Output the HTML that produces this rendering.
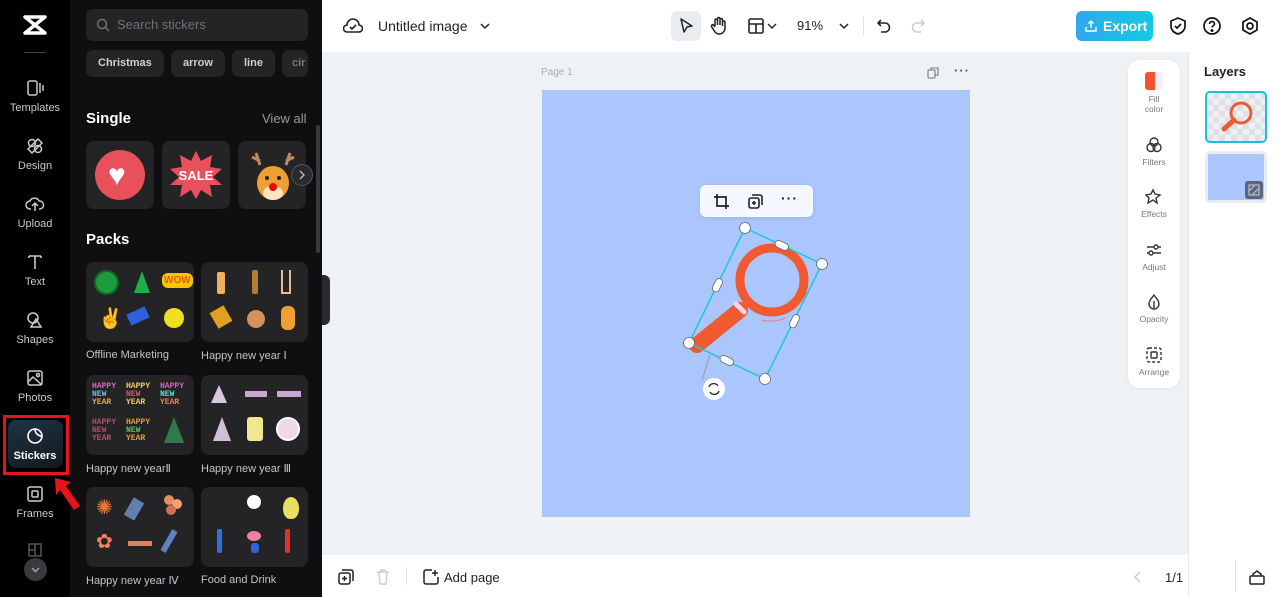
<!DOCTYPE html>
<html><head><meta charset="utf-8"><style>
*{margin:0;padding:0;box-sizing:border-box}
body{width:1280px;height:597px;overflow:hidden;font-family:"Liberation Sans",sans-serif;background:#eff2f5;position:relative}
.abs{position:absolute}
#rail{left:0;top:0;width:70px;height:597px;background:#000}
.ri{position:absolute;left:0;width:70px;text-align:center;color:#c9c9cc;font-size:11px}
.ri svg{display:block;margin:0 auto 4px}
#panel{left:70px;top:0;width:252px;height:597px;background:#0f0f11}
.chip{position:absolute;top:50px;height:27px;border-radius:7px;background:#242427;color:#d0d0d3;font-size:11px;font-weight:bold;line-height:27px;padding:0 12px}
.card{position:absolute;background:#242427;border-radius:8px}
.lab{position:absolute;color:#c4c4c8;font-size:11px}
.dot{position:absolute;border-radius:50%}
#top{left:322px;top:0;width:958px;height:52px;background:#fff}
#bot{left:322px;top:555px;width:866px;height:42px;background:#fff}
#layers{left:1188px;top:52px;width:92px;height:545px;background:#fff;border-left:1px solid #e4e7eb}
.tl{position:absolute;left:0;width:52px;text-align:center;font-size:8.5px;color:#777;line-height:10px}
.tl svg{display:block;margin:0 auto 3px}
</style></head><body>
<div id="rail" class="abs">
  <svg class="abs" style="left:22px;top:14px" width="26" height="22" viewBox="0 0 26 22"><path d="M3 3h20L3 19h20L3 3z" fill="none" stroke="#fff" stroke-width="3.5" stroke-linejoin="round"/></svg>
  <div class="abs" style="left:24px;top:52px;width:22px;height:1px;background:#444"></div>
  <div class="ri" style="top:78px"><svg width="20" height="20" viewBox="0 0 20 20" fill="none" stroke="#ccc" stroke-width="1.5"><rect x="3" y="3" width="9" height="14" rx="2"/><path d="M15 5v10M18 7v6"/></svg>Templates</div>
  <div class="ri" style="top:136px"><svg width="20" height="20" viewBox="0 0 20 20" fill="none" stroke="#ccc" stroke-width="1.5"><circle cx="7" cy="7" r="3.5"/><circle cx="13" cy="13" r="3.5"/><path d="M13 3l4 4-10 10-4-4z"/></svg>Design</div>
  <div class="ri" style="top:194px"><svg width="20" height="20" viewBox="0 0 20 20" fill="none" stroke="#ccc" stroke-width="1.5"><path d="M6 15H5a4 4 0 010-8 5 5 0 019 0 4 4 0 011 8h-1M10 17V10M7 12l3-3 3 3"/></svg>Upload</div>
  <div class="ri" style="top:252px"><svg width="20" height="20" viewBox="0 0 20 20" fill="none" stroke="#ccc" stroke-width="1.6"><path d="M4 4h12M10 4v13M4 4v2M16 4v2"/></svg>Text</div>
  <div class="ri" style="top:310px"><svg width="20" height="20" viewBox="0 0 20 20" fill="none" stroke="#ccc" stroke-width="1.5"><circle cx="8" cy="8" r="5"/><path d="M11 9l5 8H6z"/></svg>Shapes</div>
  <div class="ri" style="top:368px"><svg width="20" height="20" viewBox="0 0 20 20" fill="none" stroke="#ccc" stroke-width="1.5"><rect x="3" y="3" width="14" height="14" rx="2"/><path d="M3 14l5-5 9 8"/><circle cx="13" cy="7" r="1.5"/></svg>Photos</div>
  <div class="abs" style="left:3px;top:415px;width:66px;height:60px;border:3px solid #e8141c"></div>
  <div class="abs" style="left:8px;top:420px;width:55px;height:48px;border-radius:8px;background:linear-gradient(160deg,#1d3346,#16181c)"></div>
  <div class="ri" style="top:426px;color:#fff;font-weight:bold"><svg width="20" height="20" viewBox="0 0 20 20" fill="none" stroke="#fff" stroke-width="1.6"><path d="M17 10a7 7 0 11-7-7c0 4 3 7 7 7zM10 3a7 7 0 017 7"/></svg>Stickers</div>
  <div class="ri" style="top:484px"><svg width="20" height="20" viewBox="0 0 20 20" fill="none" stroke="#ccc" stroke-width="1.5"><rect x="3" y="3" width="14" height="14" rx="2"/><rect x="7" y="7" width="6" height="6" rx="1"/></svg>Frames</div>
  <svg class="abs" style="left:27px;top:542px" width="16" height="16" viewBox="0 0 16 16" fill="none" stroke="#555" stroke-width="1.5"><rect x="2" y="2" width="12" height="12"/><path d="M8 2v12M2 8h6"/></svg>
  <div class="abs" style="left:24px;top:558px;width:23px;height:23px;border-radius:50%;background:#3a3a3e"><svg width="23" height="23" viewBox="0 0 23 23"><path d="M8 10l3.5 3.5L15 10" fill="none" stroke="#aaa" stroke-width="1.4"/></svg></div>
</div>
<div id="panel" class="abs">
  <div class="abs" style="left:16px;top:9px;width:222px;height:32px;border-radius:7px;background:#242427;color:#707075;font-size:13px;line-height:32px;padding-left:31px">Search stickers
    <svg class="abs" style="left:10px;top:9px" width="14" height="14" viewBox="0 0 14 14" fill="none" stroke="#777" stroke-width="1.4"><circle cx="6" cy="6" r="4.5"/><path d="M9.5 9.5L13 13"/></svg></div>
  <div class="chip" style="left:16px">Christmas</div>
  <div class="chip" style="left:101px">arrow</div>
  <div class="chip" style="left:162px">line</div>
  <div class="chip" style="left:212px;width:26px;padding:0 10px;overflow:hidden;color:#777">cir</div>
  <div class="abs" style="left:16px;top:110px;color:#fff;font-size:15px;font-weight:bold">Single</div>
  <div class="abs" style="left:192px;top:111px;color:#9a9a9e;font-size:13px">View all</div>
  <div class="abs" style="left:246px;top:125px;width:4px;height:128px;border-radius:2px;background:#3a3a3e"></div>
  <div class="card" style="left:16px;top:141px;width:68px;height:68px"><div class="dot" style="left:9px;top:9px;width:50px;height:50px;background:#e8505b"></div><div class="abs" style="left:22px;top:20px;color:#fff;font-size:30px;line-height:30px">♥</div></div>
  <div class="card" style="left:92px;top:141px;width:68px;height:68px"><svg class="abs" style="left:6px;top:8px" width="56" height="52" viewBox="0 0 56 52"><polygon points="28,2 33,12 44,6 42,18 54,20 45,28 54,36 42,36 44,48 33,41 28,50 23,41 12,48 14,36 2,36 11,28 2,20 14,18 12,6 23,12" fill="#e8505b"/><text x="28" y="31" text-anchor="middle" font-family="Liberation Sans" font-weight="bold" font-size="13" fill="#fff">SALE</text></svg></div>
  <div class="card" style="left:168px;top:141px;width:68px;height:68px;overflow:hidden"><svg class="abs" style="left:10px;top:8px" width="50" height="56" viewBox="0 0 50 56"><path d="M12 16L8 4M12 12L4 8M38 16L42 4M38 12L46 8" stroke="#c08a5e" stroke-width="3"/><ellipse cx="25" cy="34" rx="16" ry="17" fill="#f0a030"/><ellipse cx="25" cy="44" rx="10" ry="7" fill="#fde6c0"/><circle cx="25" cy="38" r="4" fill="#e01010"/><circle cx="19" cy="29" r="2" fill="#222"/><circle cx="31" cy="29" r="2" fill="#222"/></svg></div>
  <div class="abs" style="left:221px;top:164px;width:22px;height:22px;border-radius:50%;background:#2a2a2e;border:1px solid #555"><svg width="20" height="20" viewBox="0 0 20 20"><path d="M8 6l4 4-4 4" fill="none" stroke="#bbb" stroke-width="1.4"/></svg></div>
  <div class="abs" style="left:16px;top:231px;color:#fff;font-size:15px;font-weight:bold">Packs</div>

  <div class="card" style="left:16px;top:262px;width:108px;height:80px">
    <div class="dot" style="left:8px;top:8px;width:25px;height:25px;background:#1e9a3f;border:2px solid #0b6a20"></div>
    <div class="abs" style="left:48px;top:9px;width:0;height:0;border-left:8px solid transparent;border-right:8px solid transparent;border-bottom:22px solid #1fae4a"></div>
    <div class="abs" style="left:76px;top:11px;color:#e85a18;font-size:10px;font-weight:bold;background:#f6c500;border-radius:6px;padding:2px 2px">WOW</div>
    <div class="abs" style="left:12px;top:44px;color:#fff;font-size:20px">✌</div>
    <div class="abs" style="left:42px;top:48px;width:20px;height:12px;background:#3060e0;transform:rotate(-25deg)"></div>
    <div class="dot" style="left:78px;top:46px;width:20px;height:20px;background:#f0e020"></div>
  </div>
  <div class="card" style="left:131px;top:262px;width:107px;height:80px">
    <div class="abs" style="left:16px;top:10px;width:8px;height:22px;background:#f0b060;border-radius:2px"></div>
    <div class="abs" style="left:51px;top:8px;width:6px;height:24px;background:#b08030;border-radius:2px"></div>
    <div class="abs" style="left:80px;top:8px;width:10px;height:24px;border:2px solid #e0c090;border-top:none"></div>
    <div class="abs" style="left:12px;top:46px;width:16px;height:18px;background:#e0a020;transform:rotate(-30deg)"></div>
    <div class="dot" style="left:46px;top:48px;width:18px;height:18px;background:#d8905a"></div>
    <div class="abs" style="left:80px;top:44px;width:14px;height:24px;border-radius:6px;background:#f0a030"></div>
  </div>
  <div class="lab" style="left:16px;top:349px">Offline Marketing</div>
  <div class="lab" style="left:131px;top:349px">Happy new year Ⅰ</div>

  <div class="card" style="left:16px;top:375px;width:108px;height:80px;font-size:8px;font-weight:bold;line-height:8px;font-family:'Liberation Mono',monospace">
    <div class="abs" style="left:6px;top:8px;color:#e060c0">HAPPY<br><span style="color:#60c0f0">NEW</span><br><span style="color:#f0a040">YEAR</span></div>
    <div class="abs" style="left:40px;top:8px;color:#f0d040">HAPPY<br><span style="color:#e05070">NEW</span><br>YEAR</div>
    <div class="abs" style="left:74px;top:8px;color:#e060c0">HAPPY<br><span style="color:#60e0d0">NEW</span><br><span style="color:#f08040">YEAR</span></div>
    <div class="abs" style="left:6px;top:44px;color:#b05060">HAPPY<br>NEW<br>YEAR</div>
    <div class="abs" style="left:40px;top:44px;color:#e0a030">HAPPY<br><span style="color:#60c060">NEW</span><br>YEAR</div>
    <div class="abs" style="left:78px;top:42px;width:0;height:0;border-left:10px solid transparent;border-right:10px solid transparent;border-bottom:26px solid #2e7a4a"></div>
  </div>
  <div class="card" style="left:131px;top:375px;width:107px;height:80px">
    <div class="abs" style="left:10px;top:10px;width:0;height:0;border-left:8px solid transparent;border-right:8px solid transparent;border-bottom:18px solid #d8c8e0"></div>
    <div class="abs" style="left:44px;top:16px;width:22px;height:6px;background:#c8a8d0"></div>
    <div class="abs" style="left:76px;top:16px;width:24px;height:6px;background:#c8a8d0"></div>
    <div class="abs" style="left:12px;top:42px;width:0;height:0;border-left:9px solid transparent;border-right:9px solid transparent;border-bottom:24px solid #d0c0d8"></div>
    <div class="abs" style="left:46px;top:42px;width:16px;height:24px;background:#f0e890;border-radius:3px"></div>
    <div class="dot" style="left:75px;top:42px;width:24px;height:24px;background:#f0d8e8;border:2px solid #fff"></div>
  </div>
  <div class="lab" style="left:16px;top:462px">Happy new yearⅡ</div>
  <div class="lab" style="left:131px;top:462px">Happy new year Ⅲ</div>

  <div class="card" style="left:16px;top:487px;width:108px;height:80px">
    <div class="abs" style="left:10px;top:8px;color:#e07840;font-size:20px">✺</div>
    <div class="abs" style="left:42px;top:12px;width:12px;height:20px;background:#6080b0;transform:rotate(30deg)"></div>
    <div class="dot" style="left:78px;top:8px;width:10px;height:10px;background:#e09060"></div>
    <div class="dot" style="left:86px;top:12px;width:10px;height:10px;background:#f0a070"></div>
    <div class="dot" style="left:80px;top:18px;width:10px;height:10px;background:#d07050"></div>
    <div class="abs" style="left:10px;top:42px;color:#f08060;font-size:20px">✿</div>
    <div class="abs" style="left:42px;top:54px;width:24px;height:5px;background:#e08060"></div>
    <div class="abs" style="left:80px;top:42px;width:6px;height:24px;background:#6080c0;transform:rotate(30deg)"></div>
  </div>
  <div class="card" style="left:131px;top:487px;width:107px;height:80px">
    <div class="dot" style="left:46px;top:8px;width:14px;height:14px;background:#fff"></div>
    <div class="abs" style="left:82px;top:10px;width:16px;height:22px;border-radius:50% 50% 45% 45%;background:#e8e060"></div>
    <div class="abs" style="left:16px;top:42px;width:5px;height:24px;background:#3070e0;border-radius:2px"></div>
    <div class="dot" style="left:46px;top:44px;width:14px;height:10px;background:#f080a0"></div>
    <div class="abs" style="left:50px;top:56px;width:8px;height:10px;background:#3060e0;border-radius:3px"></div>
    <div class="abs" style="left:84px;top:42px;width:5px;height:24px;background:#e03030;border-radius:2px"></div>
  </div>
  <div class="lab" style="left:16px;top:574px">Happy new year Ⅳ</div>
  <div class="lab" style="left:131px;top:574px">Food and Drink</div>
</div>
<svg class="abs" style="left:52px;top:476px;z-index:5" width="30" height="38" viewBox="0 0 30 38"><path d="M3 2l16 4-5 4 14 20-6 4-14-20-4 5z" fill="#e8141c"/></svg>
<div class="abs" style="left:322px;top:275px;width:8px;height:50px;border-radius:0 6px 6px 0;background:#2a2a2e"></div>

<div id="top" class="abs">
  <svg class="abs" style="left:21px;top:17px" width="20" height="18" viewBox="0 0 20 18" fill="none" stroke="#222" stroke-width="1.6"><path d="M5 15H4a3.5 3.5 0 010-7 6 6 0 0112 0 3.5 3.5 0 010 7H5z"/><path d="M7 10l2 2 4-4"/></svg>
  <div class="abs" style="left:56px;top:18px;font-size:14px;color:#222">Untitled image</div>
  <svg class="abs" style="left:157px;top:20px" width="12" height="12" viewBox="0 0 12 12"><path d="M2 4l4 4 4-4" fill="none" stroke="#222" stroke-width="1.5"/></svg>
  <div class="abs" style="left:349px;top:11px;width:30px;height:30px;border-radius:6px;background:#e9ecf0"></div>
  <svg class="abs" style="left:355px;top:17px" width="18" height="18" viewBox="0 0 18 18"><path d="M4 2l11 7-5 1-3 5z" fill="none" stroke="#222" stroke-width="1.5" stroke-linejoin="round"/></svg>
  <svg class="abs" style="left:388px;top:16px" width="18" height="20" viewBox="0 0 18 20" fill="none" stroke="#222" stroke-width="1.5"><path d="M5 10V4a1.3 1.3 0 012.5 0v5M7.5 9V2.5a1.3 1.3 0 012.5 0V9M10 9V3.5a1.3 1.3 0 012.5 0V10M12.5 10V6a1.3 1.3 0 012.5 0v6a6 6 0 01-6 6c-3 0-4-2-6-5l-1.5-2.5a1.3 1.3 0 012-1.5L5 11"/></svg>
  <svg class="abs" style="left:425px;top:17px" width="18" height="18" viewBox="0 0 18 18" fill="none" stroke="#222" stroke-width="1.6"><rect x="2" y="2" width="14" height="14" rx="1.5"/><path d="M2 7h14M9 7v9"/></svg>
  <svg class="abs" style="left:445px;top:21px" width="10" height="10" viewBox="0 0 10 10"><path d="M1 3l4 4 4-4" fill="none" stroke="#222" stroke-width="1.4"/></svg>
  <div class="abs" style="left:475px;top:18px;font-size:13px;color:#222">91%</div>
  <svg class="abs" style="left:516px;top:20px" width="12" height="12" viewBox="0 0 12 12"><path d="M2 4l4 4 4-4" fill="none" stroke="#222" stroke-width="1.5"/></svg>
  <div class="abs" style="left:541px;top:17px;width:1px;height:18px;background:#e0e0e0"></div>
  <svg class="abs" style="left:553px;top:17px" width="18" height="18" viewBox="0 0 18 18" fill="none" stroke="#222" stroke-width="1.6"><path d="M6 3L3 6l3 3M3 6h7a4.5 4.5 0 010 9H6"/></svg>
  <svg class="abs" style="left:587px;top:17px" width="18" height="18" viewBox="0 0 18 18" fill="none" stroke="#ccc" stroke-width="1.6"><path d="M12 3l3 3-3 3M15 6H8a4.5 4.5 0 000 9h4"/></svg>
  <div class="abs" style="left:754px;top:11px;width:77px;height:30px;border-radius:6px;background:linear-gradient(90deg,#2fa8ee,#14c9e2);color:#fff;font-weight:bold;font-size:14px;line-height:30px;padding-left:27px">Export
    <svg class="abs" style="left:8px;top:8px" width="14" height="14" viewBox="0 0 14 14" fill="none" stroke="#fff" stroke-width="1.4"><path d="M2 8v4h10V8M7 9V2M4.5 4.5L7 2l2.5 2.5"/></svg></div>
  <svg class="abs" style="left:846px;top:16px" width="20" height="20" viewBox="0 0 20 20" fill="none" stroke="#111" stroke-width="1.7"><path d="M10 2l7 3v5c0 4-3 7-7 8-4-1-7-4-7-8V5z"/><path d="M7 10l2 2 4-4"/></svg>
  <svg class="abs" style="left:880px;top:16px" width="20" height="20" viewBox="0 0 20 20" fill="none" stroke="#111" stroke-width="1.7"><circle cx="10" cy="10" r="8"/><path d="M7.5 8a2.5 2.5 0 115 0c0 1.5-2.5 2-2.5 3.5"/><circle cx="10" cy="14.5" r=".6" fill="#111"/></svg>
  <svg class="abs" style="left:918px;top:16px" width="20" height="20" viewBox="0 0 20 20" fill="none" stroke="#111" stroke-width="1.7"><path d="M10 2l7 4v8l-7 4-7-4V6z"/><circle cx="10" cy="10" r="3"/></svg>
</div>

<div class="abs" style="left:541px;top:67px;font-size:10px;color:#aab">Page 1</div>
<svg class="abs" style="left:927px;top:67px" width="12" height="12" viewBox="0 0 12 12" fill="none" stroke="#777" stroke-width="1.1"><rect x="1" y="3" width="7" height="8" rx="1"/><path d="M4 3V1h7v7H8"/></svg>
<div class="abs" style="left:954px;top:63px;font-size:13px;color:#555;font-weight:bold;letter-spacing:1px">···</div>
<div class="abs" style="left:542px;top:90px;width:428px;height:427px;background:#abc5fd"></div>

<div class="abs" style="left:700px;top:185px;width:113px;height:32px;border-radius:6px;background:#f4f7fd;box-shadow:0 1px 4px rgba(0,0,0,.1)"></div>
<svg class="abs" style="left:713px;top:193px" width="17" height="17" viewBox="0 0 17 17" fill="none" stroke="#222" stroke-width="1.7"><path d="M4 1v12h12M1 4h12v12"/></svg>
<svg class="abs" style="left:747px;top:193px" width="17" height="17" viewBox="0 0 17 17" fill="none" stroke="#222" stroke-width="1.6"><rect x="2" y="5" width="10" height="10" rx="2"/><path d="M5 2h8a2 2 0 012 2v8M7 8v4M5 10h4"/></svg>
<div class="abs" style="left:781px;top:190px;font-size:14px;font-weight:bold;color:#222;letter-spacing:1px">···</div>

<svg class="abs" style="left:660px;top:210px;overflow:visible" width="200" height="200" viewBox="660 210 200 200">
  <line x1="710" y1="355" x2="702" y2="380" stroke="#999" stroke-width="1"/>
  <path d="M697 345L740 310" stroke="#f05a30" stroke-width="16" stroke-linecap="round"/>
  <circle cx="772" cy="280" r="32" fill="none" stroke="#f05a30" stroke-width="9"/>
  <path d="M736 304l8 8" stroke="#f8d8e8" stroke-width="5" stroke-linecap="round"/>
  <path d="M762 320q12 3 24-2" fill="none" stroke="#f07070" stroke-width="0.8"/>
  <polygon points="745,228 822,264 765,379 689,343" fill="none" stroke="#1cc8d8" stroke-width="1.5"/>
  <g fill="#fff" stroke="#666" stroke-width="0.8">
    <circle cx="745" cy="228" r="5.5"/><circle cx="822" cy="264" r="5.5"/><circle cx="765" cy="379" r="5.5"/><circle cx="689" cy="343" r="5.5"/>
    <rect x="775" y="242" width="14" height="7" rx="3.5" transform="rotate(25 782 245)"/>
    <rect x="787" y="318" width="14" height="7" rx="3.5" transform="rotate(-64 794 321)"/>
    <rect x="720" y="357" width="14" height="7" rx="3.5" transform="rotate(25 727 360)"/>
    <rect x="710" y="282" width="14" height="7" rx="3.5" transform="rotate(-64 717 285)"/>
  </g>
  <circle cx="714" cy="389" r="11" fill="#fff"/>
  <path d="M709 387a5 5 0 019-1M719 391a5 5 0 01-9 1" fill="none" stroke="#222" stroke-width="1.3"/>
</svg>

<div class="abs" style="left:1128px;top:60px;width:52px;height:328px;border-radius:12px;background:#fff;box-shadow:0 1px 4px rgba(0,0,0,.06)">
  <div class="tl" style="top:12px"><div style="width:18px;height:18px;margin:0 auto 4px;border-radius:3px;background:linear-gradient(90deg,#f5532d 55%,#f6eefc 55%)"></div>Fill<br>color</div>
  <div class="tl" style="top:76px"><svg width="18" height="18" viewBox="0 0 18 18" fill="none" stroke="#333" stroke-width="1.4"><circle cx="9" cy="6" r="4"/><circle cx="6" cy="11.5" r="4"/><circle cx="12" cy="11.5" r="4"/></svg>Filters</div>
  <div class="tl" style="top:128px"><svg width="18" height="18" viewBox="0 0 18 18" fill="none" stroke="#333" stroke-width="1.4"><path d="M8 2l2 4 5 1-4 3 1 5-4-3-5 3 1-5-3-3 5-1z"/></svg>Effects</div>
  <div class="tl" style="top:181px"><svg width="18" height="18" viewBox="0 0 18 18" fill="none" stroke="#333" stroke-width="1.4"><path d="M2 6h14M2 12h14"/><circle cx="11" cy="6" r="2" fill="#fff"/><circle cx="6" cy="12" r="2" fill="#fff"/></svg>Adjust</div>
  <div class="tl" style="top:233px"><svg width="18" height="18" viewBox="0 0 18 18" fill="none" stroke="#333" stroke-width="1.4"><path d="M9 2c3 4 5 6 5 9a5 5 0 01-10 0c0-3 2-5 5-9zM9 8v7"/></svg>Opacity</div>
  <div class="tl" style="top:286px"><svg width="18" height="18" viewBox="0 0 18 18" fill="none" stroke="#333" stroke-width="1.4"><rect x="2" y="2" width="14" height="14" rx="2" stroke-dasharray="3 2"/><rect x="6" y="6" width="6" height="6" rx="1"/></svg>Arrange</div>
</div>

<div id="layers" class="abs">
  <div class="abs" style="left:15px;top:12px;font-size:13px;font-weight:bold;color:#222">Layers</div>
  <div class="abs" style="left:16px;top:39px;width:62px;height:52px;border:2px solid #16c2db;border-radius:5px;background:repeating-conic-gradient(#dde1e6 0 25%,#eef0f3 0 50%) 0 0/12px 12px">
    <svg width="58" height="48" viewBox="0 0 58 48"><circle cx="34" cy="20" r="10" fill="none" stroke="#f05a30" stroke-width="3"/><path d="M17 36l10-9" stroke="#f05a30" stroke-width="5" stroke-linecap="round"/></svg></div>
  <div class="abs" style="left:16px;top:99px;width:62px;height:52px;border:3px solid #e9edf2;border-radius:5px;background:#abc5fd">
    <div class="abs" style="right:1px;bottom:1px;width:18px;height:18px;border-radius:3px;background:#5a6480"><svg width="18" height="18" viewBox="0 0 18 18" fill="none" stroke="#ccd" stroke-width="1"><rect x="4" y="4" width="10" height="10"/><path d="M4 10l6-6M7 14l7-7"/></svg></div>
  </div>
</div>

<div id="bot" class="abs">
  <svg class="abs" style="left:16px;top:14px" width="16" height="16" viewBox="0 0 16 16" fill="none" stroke="#222" stroke-width="1.5"><rect x="1" y="4" width="11" height="11" rx="2"/><path d="M4 1h9a2 2 0 012 2v9M6.5 7v5M4 9.5h5"/></svg>
  <svg class="abs" style="left:54px;top:14px" width="14" height="16" viewBox="0 0 14 16" fill="none" stroke="#ccc" stroke-width="1.4"><path d="M1 3h12M5 3V1h4v2M3 3l1 12h6l1-12"/></svg>
  <div class="abs" style="left:84px;top:12px;width:1px;height:18px;background:#e0e0e0"></div>
  <svg class="abs" style="left:101px;top:14px" width="16" height="16" viewBox="0 0 16 16" fill="none" stroke="#222" stroke-width="1.5"><path d="M9 1H3a2 2 0 00-2 2v10a2 2 0 002 2h10a2 2 0 002-2V8M12 1v6M9 4h6"/></svg>
  <div class="abs" style="left:122px;top:15px;font-size:13px;color:#222">Add page</div>
  <svg class="abs" style="left:810px;top:15px" width="12" height="14" viewBox="0 0 12 14"><path d="M8 2L3 7l5 5" fill="none" stroke="#ccc" stroke-width="1.5"/></svg>
  <div class="abs" style="left:843px;top:15px;font-size:13px;color:#222">1/1</div>
  <svg class="abs" style="left:880px;top:15px" width="12" height="14" viewBox="0 0 12 14"><path d="M4 2l5 5-5 5" fill="none" stroke="#ccc" stroke-width="1.5"/></svg>
</div>
<div class="abs" style="left:1188px;top:555px;width:92px;height:42px;background:#fff;border-left:1px solid #e4e7eb"></div>
<div class="abs" style="left:1235px;top:560px;width:1px;height:32px;background:#e0e0e0"></div>
<svg class="abs" style="left:1249px;top:569px" width="16" height="16" viewBox="0 0 16 16" fill="none" stroke="#222" stroke-width="1.5"><rect x="1" y="7" width="14" height="8" rx="1"/><path d="M4 7V5l4-3 4 3v2"/></svg>
</body></html>
